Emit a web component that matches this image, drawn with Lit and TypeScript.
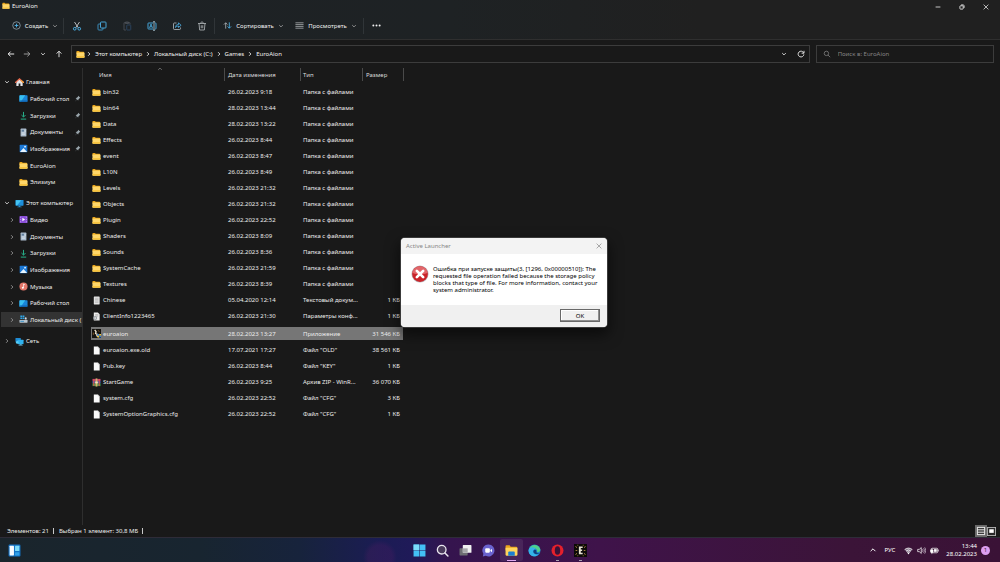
import { LitElement, html, css, svg, nothing, TemplateResult } from "lit";
import { customElement, state } from "lit/decorators.js";
import { classMap } from "lit/directives/class-map.js";

const art = (box: string, cls: string, body: unknown) =>
  html`<svg class=${cls} viewBox=${box} aria-hidden="true" fill="none">${body}</svg>`;

const glyphs: Record<string, TemplateResult> = {
  folder: svg`<path d="M1 3.2c0-.7.5-1.2 1.200-1.200h4.300l1.800 2H16.800c.7 0 1.200.5 1.200 1.200v3H1z" fill="#e8a317"/><path d="M1 5.600h16.800c.7 0 1.200.5 1.200 1.200v9c0 .7-.5 1.200-1.200 1.200H2.200c-.7 0-1.200-.5-1.200-1.200z" fill="#ffd76a"/><path d="M1 13.500h18v2.300c0 .8-.5 1.200-1.200 1.200H2.200c-.7 0-1.200-.5-1.200-1.200z" fill="#f8c440"/>`,
  home: svg`<path d="M3 8v10h5v-6h4v6h5V8l-7-6z" fill="#e4e4e8"/><path d="M1 10 10 2l9 8" stroke="#e8694a" stroke-width="2.600" stroke-linecap="round"/><path d="M14 6l5 4" stroke="#f2a33a" stroke-width="2.600" stroke-linecap="round"/>`,
  desktop: svg`<rect x="1" y="3" width="18" height="14" rx="1.500" fill="#1a86d8"/><path d="M1 4.500C1 3.700 1.700 3 2.500 3H14L4 17H2.500C1.700 17 1 16.300 1 15.500z" fill="#39c0f0"/><path d="M1 14.500h18v1c0 .8-.7 1.500-1.500 1.500h-15C1.700 17 1 16.300 1 15.500z" fill="#0f63b0"/>`,
  download: svg`<path d="M10 2v11M5.500 9l4.500 4.500L14.500 9M4 18h12" stroke="#26b08a" stroke-width="2.200"/>`,
  docs: svg`<rect x="3.500" y="1" width="13" height="18" rx="1.500" fill="#a9bacb"/><rect x="6" y="4" width="5" height="4" fill="#5f7d9c"/><path d="M12.500 5H15M12.500 7.500H15M6 11h8M6 14h8" stroke="#e9f0f7" stroke-width="1.400"/>`,
  pictures: svg`<rect x="1.500" y="1.500" width="17" height="17" rx="2" fill="#1b78d6"/><path d="M2 18l8-9 8 9z" fill="#e8f5ff"/><circle cx="13.500" cy="6" r="2" fill="#e8f5ff"/>`,
  pc: svg`<rect x="1" y="2" width="18" height="13" rx="1.500" fill="#1d8fdb"/><path d="M2 3h12L5 14H2z" fill="#45c5f2"/><path d="M8 15h4v2H8zM5 17h10v1.500H5z" fill="#2c93c9"/>`,
  video: svg`<rect x="1" y="2" width="18" height="16" rx="2" fill="#8a4fd8"/><path d="M3.500 4v2M3.500 9v2M3.500 14v2M16.500 4v2M16.500 9v2M16.500 14v2" stroke="#d7b9ff" stroke-width="1.600"/><path d="M7.500 6l6 4-6 4z" fill="#fff"/>`,
  music: svg`<circle cx="10" cy="10" r="9" fill="#e2776a"/><circle cx="8.500" cy="13" r="2.200" fill="#fff"/><path d="M10 13V4.500l3.500 2" stroke="#fff" stroke-width="1.500"/>`,
  disk: svg`<path d="M3 1h4v4H3zM8 1h4v4H8zM3 6h4v3H3zM8 6h4v3H8z" fill="#2fa8ea"/><rect x="1" y="11" width="18" height="6" rx="1" fill="#b9c4cd"/><rect x="3" y="13" width="8" height="2" fill="#2d8ecb"/><path d="M13 10V6.500c0-2 4-2 4 0V10z" fill="#d7dde2"/>`,
  network: svg`<rect x="1" y="2" width="12" height="9" rx="1" fill="#1f8ad2"/><rect x="6" y="6" width="13" height="10" rx="1" fill="#2eb2ef"/><path d="M10 16h5v2h-5zM8 18h9v1H8z" fill="#6fc4e8"/><circle cx="5" cy="12" r="3" fill="#58cdf5"/>`,
  text: svg`<rect x="4" y="1" width="13" height="18" rx="1" fill="#e4e4e4"/><path d="M6.500 5h8M6.500 8h8M6.500 11h8M6.500 14h8" stroke="#a0a0a0" stroke-width="1.200"/>`,
  ini: svg`<path d="M4 1h9l4 4v14H4z" fill="#ededed"/><path d="M7 6h7M7 9h7" stroke="#8b8b8b" stroke-width="1.200"/><circle cx="7" cy="13.500" r="4.500" fill="#9da3a8"/><circle cx="7" cy="13.500" r="1.800" fill="#f0f0f0"/>`,
  exe: svg`<rect x="0" y="0" width="20" height="20" fill="#15130f"/><path d="M6 2l3 4-1 4 3 1v4l4 2" stroke="#f1e6cf" stroke-width="3"/><path d="M3 8v5M14 3l2 3" stroke="#a8712c" stroke-width="1.600"/><path d="M12 11h4v4h-4z" fill="#2f7fe0"/><path d="M16 11h4v4h-4z" fill="#f1c232"/><path d="M12 15h4v4h-4z" fill="#f1c232"/><path d="M16 15h4v4h-4z" fill="#2f7fe0"/>`,
  blank: svg`<path d="M4 1h9l4 4v14H4z" fill="#fafafa"/><path d="M13 1v4h4z" fill="#b9b9b9"/>`,
  zip: svg`<rect x="1" y="2" width="18" height="5" fill="#b5427a"/><rect x="1" y="7" width="18" height="5" fill="#3f63c4"/><rect x="1" y="12" width="18" height="6" fill="#3c9a50"/><path d="M4 2v16M16 2v16" stroke="#e55248" stroke-width="2.400"/><rect x="8" y="1" width="4" height="18" fill="#d8b069"/><rect x="7" y="8" width="6" height="4" fill="#f5e3b5"/>`,
  pin: svg`<path d="M12 2l6 6-2 1-3 3-1 4-3.500-3.500L2 19l6-7L4.500 8.500l4-1 3-3.500z" fill="#9aa6ad"/>`,
  down: svg`<path d="M4 7l6 6 6-6" stroke="currentColor" stroke-width="2.800"/>`,
  right: svg`<path d="M7 4l6 6-6 6" stroke="currentColor" stroke-width="2.800"/>`,
  up: svg`<path d="M4 13l6-6 6 6" stroke="currentColor" stroke-width="2.400"/>`,
  arrowL: svg`<path d="M18 10H3M9 4l-6 6 6 6" stroke="currentColor" stroke-width="2.400"/>`,
  arrowR: svg`<path d="M2 10h15M11 4l6 6-6 6" stroke="currentColor" stroke-width="2.200"/>`,
  arrowU: svg`<path d="M10 18V3M4 9l6-6 6 6" stroke="currentColor" stroke-width="2.200"/>`,
  refresh: svg`<path d="M16.500 7A7.200 7.200 0 1 0 17.200 11" stroke="currentColor" stroke-width="2.200"/><path d="M17.500 2v6h-6" stroke="currentColor" stroke-width="2.200"/>`,
  search: svg`<circle cx="8.500" cy="8.500" r="5.500" stroke="currentColor" stroke-width="2"/><path d="M12.500 12.500L18 18" stroke="currentColor" stroke-width="2"/>`,
  plus: svg`<circle cx="10" cy="10" r="8.400" stroke="#9fb0bb" stroke-width="1.600"/><path d="M10 6v8M6 10h8" stroke="#4cb4ec" stroke-width="2"/>`,
  cut: svg`<path d="M5 2l7.500 11.500M15 2L7.500 13.500" stroke="#c6cbce" stroke-width="1.800"/><circle cx="5.500" cy="15.500" r="2.700" stroke="#4cb4ec" stroke-width="1.900"/><circle cx="14.500" cy="15.500" r="2.700" stroke="#4cb4ec" stroke-width="1.900"/>`,
  copy: svg`<path d="M6 6H3.500C2.700 6 2 6.700 2 7.500v9c0 .8.7 1.500 1.500 1.500h7c.8 0 1.500-.7 1.500-1.500V14" stroke="#3f98cc" stroke-width="1.800"/><rect x="7" y="2" width="11" height="12" rx="1.500" stroke="#4cb4ec" stroke-width="1.800"/>`,
  paste: svg`<path d="M8 18H4V3.500h12V7M7 2h6v3H7z" stroke="#4b5157" stroke-width="1.700"/><rect x="9.500" y="8" width="8" height="10" rx="1" stroke="#2d4866" stroke-width="1.700"/>`,
  rename: svg`<path d="M12 4H3c-.6 0-1 .4-1 1v10c0 .6.4 1 1 1h9M16 4h1c.6 0 1 .4 1 1v10c0 .6-.4 1-1 1h-1" stroke="#4cb4ec" stroke-width="1.800"/><path d="M5 14l3-8 3 8M6 11.500h4" stroke="#4cb4ec" stroke-width="1.500"/><path d="M14 1.500v17M12 1.500h4M12 18.500h4" stroke="#b9d6e6" stroke-width="1.500"/>`,
  share: svg`<path d="M9 4H4.500C3.700 4 3 4.700 3 5.500v10c0 .8.7 1.500 1.500 1.500h11c.8 0 1.500-.7 1.500-1.500V13" stroke="#aab3b9" stroke-width="1.700"/><path d="M7 13c0-4 2-6 6-6V3.500L18 8.500l-5 4.500V10c-3 0-4.500 1-6 3z" stroke="#4cb4ec" stroke-width="1.600"/>`,
  trash: svg`<path d="M2 5h16M4 5l1.300 13h9.400L16 5M7 5c0-4 6-4 6 0M8.500 8.500v6M11.500 8.500v6" stroke="#b5babd" stroke-width="1.600"/>`,
  sort: svg`<path d="M6 17V4M2 8l4-4 4 4" stroke="#b9bfc3" stroke-width="1.700"/><path d="M14 3v13M10 12l4 4 4-4" stroke="#4cb4ec" stroke-width="1.900"/>`,
  view: svg`<path d="M1 4h18M1 8h18M1 12h18M1 16h18" stroke="#a9adb0" stroke-width="1.800"/>`,
  dots: svg`<circle cx="3" cy="10" r="2.200" fill="#f0f0f0"/><circle cx="10" cy="10" r="2.200" fill="#f0f0f0"/><circle cx="17" cy="10" r="2.200" fill="#f0f0f0"/>`,
  min: svg`<path d="M2 10h16" stroke="currentColor" stroke-width="2.600"/>`,
  restore: svg`<rect x="3" y="6" width="11" height="11" rx="2" stroke="currentColor" stroke-width="2.800"/><path d="M7 3h7c1.700 0 3 1.300 3 3v7" stroke="currentColor" stroke-width="2.800"/>`,
  close: svg`<path d="M2 2l16 16M18 2L2 18" stroke="currentColor" stroke-width="2.400"/>`,
  error: svg`<circle cx="20" cy="20" r="19" fill="#b9bcc0"/><circle cx="20" cy="20" r="17.500" fill="#c9242a"/><path d="M3 17a17.300 17.300 0 0 1 34 0C28 22 12 22 3 17z" fill="#e2666a"/><path d="M13 13l14 14M27 13L13 27" stroke="#fff" stroke-width="6" stroke-linecap="round"/>`,
  details: svg`<rect x="0" y="0" width="20" height="20" fill="#6a6a6a"/><rect x="4" y="4" width="12" height="12" fill="#3a3a3a" stroke="#e8e8e8" stroke-width="1.600"/><path d="M4 8h12M4 12h12" stroke="#e8e8e8" stroke-width="1.600"/>`,
  thumbs: svg`<rect x="1" y="1" width="18" height="18" fill="#2a2a2a" stroke="#b5b5b5" stroke-width="2"/><rect x="5" y="5" width="10" height="8" fill="#fff"/>`,
  widgets: svg`<rect x="1" y="1" width="22" height="22" rx="2" fill="#1474c6"/><rect x="3" y="3" width="8" height="18" rx="1" fill="#f7fbff"/><rect x="13" y="3" width="8" height="10" rx="1" fill="#7fdcf9"/><rect x="13" y="15" width="8" height="6" rx="1" fill="#2fa0e8"/>`,
  start: svg`<path d="M1 1h10.500v10.500H1zM12.500 1H23v10.500H12.500zM1 12.500h10.500V23H1zM12.500 12.500H23V23H12.500z" fill="#43c0f5"/><path d="M1 1h10.500v10.500H1z" fill="#7bdcfb"/>`,
  find: svg`<circle cx="10.500" cy="10.500" r="8" stroke="#e9e4ee" stroke-width="2.400" fill="#4a3a5c"/><path d="M16.500 16.500L22 22" stroke="#e9e4ee" stroke-width="2.800" stroke-linecap="round"/>`,
  tasks: svg`<rect x="1" y="8" width="15" height="13" rx="1" fill="#6d6d72"/><rect x="7" y="2" width="16" height="14" rx="1" fill="#f1f1f1"/><path d="M7 8h9v8H7z" fill="#a7a7aa"/>`,
  chat: svg`<path d="M12 1a11 11 0 1 1-5 20.800L1.500 23l1-5A11 11 0 0 1 12 1z" fill="#6a63cf"/><rect x="6" y="8" width="8.500" height="8" rx="1.500" fill="#fff"/><path d="M15.500 11l3-2v6l-3-2z" fill="#fff"/>`,
  explorer: svg`<path d="M1 4c0-1 .6-1.500 1.500-1.500h6l2 2.500H21c1 0 1.500.6 1.500 1.500V12H1z" fill="#e9a51c"/><path d="M1 7h22v13c0 1-.5 1.500-1.500 1.500h-19C1.500 21.500 1 21 1 20z" fill="#ffd55c"/><path d="M6 15.500c0-1 .6-1.500 1.500-1.500h9c1 0 1.500.5 1.500 1.500v6H6z" fill="#1b7fd0"/>`,
  edge: svg`<circle cx="12" cy="12" r="11" fill="#1c7fd0"/><path d="M2 9C5 0 19-1 22.500 9c1 4-2 6.500-6 6 1-2 0-6-4-6.500C8 8 4 10 2 9z" fill="#4fd08a"/><path d="M1.500 9.500C6 4 14 6 14.500 11c-2-1.500-5-.5-5 3 0 4 5 7 10 5C14 26 1 23 1 12z" fill="#35b4e8"/><path d="M14.500 11c-2-1-4.500 0-4.500 3 0 2 1.500 4 4 4.500 3 .5 5-.5 7-1.500-4 0-7-1-5.500-3.500z" fill="#123f7a"/>`,
  opera: svg`<circle cx="12" cy="12" r="11" fill="#e5202c"/><ellipse cx="12" cy="12" rx="5" ry="8" fill="#3a1238"/>`,
  game: svg`<rect x="0" y="0" width="24" height="24" fill="#0d0b08"/><path d="M9 4.500h7v2.800h-3.500v3H15v2.800h-2.500v3.200H16V19H9z" fill="#e8e2d2"/><path d="M3 4l2 3M3 12h3M3 20l2-3M21 4l-2 3M21 12h-3M21 20l-2-3M7 1.500v1.500M17 1.500v1.500M7 21v1.500M17 21v1.500" stroke="#c59a4a" stroke-width="1.500"/>`,
  wifi: svg`<path d="M1 8a13 13 0 0 1 18 0l-9 10z" fill="#8c7a90"/><path d="M1.500 8a12.500 12.500 0 0 1 17 0M4.500 11.300a8 8 0 0 1 11 0M7.300 14.300a4 4 0 0 1 5.400 0" stroke="#fff" stroke-width="1.700"/><circle cx="10" cy="16.500" r="1.600" fill="#fff"/>`,
  sound: svg`<path d="M1.500 7.500H5l4.500-4v13L5 12.500H1.500z" stroke="#fff" stroke-width="1.600"/><path d="M12 7c1.500 1.800 1.500 4.200 0 6M14.500 5c2.500 3 2.500 7 0 10M17 3c3.200 4.200 3.200 9.800 0 14" stroke="#e6dde8" stroke-width="1.400"/>`,
  battery: svg`<rect x="3" y="5" width="14" height="10" rx="2" stroke="#fff" stroke-width="1.600"/><rect x="9" y="7" width="6" height="6" fill="#fff"/><path d="M18.500 8v4" stroke="#fff" stroke-width="1.600"/><path d="M1 9h6v3c0 2-1 3-3 3s-3-1-3-3zM2.500 9V6M5.500 9V6M4 15v3" fill="#fff" stroke="#fff" stroke-width="1.200"/>`,
};

const icon = (name: string, cls = "i10", box = "0 0 20 20") => art(box, cls, glyphs[name]);

interface Entry { name: string; date: string; type: string; size?: string; icon: string; }

const FOLDER = "Папка с файлами";
const dir = (name: string, date: string): Entry => ({ name, date, type: FOLDER, icon: "folder" });

const FILES: Entry[] = [
  dir("bin32", "26.02.2023 9:18"),
  dir("bin64", "28.02.2023 13:44"),
  dir("Data", "28.02.2023 13:22"),
  dir("Effects", "26.02.2023 8:44"),
  dir("event", "26.02.2023 8:47"),
  dir("L10N", "26.02.2023 8:49"),
  dir("Levels", "26.02.2023 21:32"),
  dir("Objects", "26.02.2023 21:32"),
  dir("Plugin", "26.02.2023 22:52"),
  dir("Shaders", "26.02.2023 8:09"),
  dir("Sounds", "26.02.2023 8:36"),
  dir("SystemCache", "26.02.2023 21:59"),
  dir("Textures", "26.02.2023 8:39"),
  { name: "Chinese", date: "05.04.2020 12:14", type: "Текстовый докум...", size: "1 КБ", icon: "text" },
  { name: "ClientInfo1223465", date: "26.02.2023 21:30", type: "Параметры конф...", size: "1 КБ", icon: "ini" },
  { name: "euroaion", date: "28.02.2023 13:27", type: "Приложение", size: "31 546 КБ", icon: "exe" },
  { name: "euroaion.exe.old", date: "17.07.2021 17:27", type: 'Файл "OLD"', size: "38 561 КБ", icon: "blank" },
  { name: "Pub.key", date: "26.02.2023 8:44", type: 'Файл "KEY"', size: "1 КБ", icon: "blank" },
  { name: "StartGame", date: "26.02.2023 9:25", type: "Архив ZIP - WinR...", size: "36 070 КБ", icon: "zip" },
  { name: "system.cfg", date: "26.02.2023 22:52", type: 'Файл "CFG"', size: "3 КБ", icon: "blank" },
  { name: "SystemOptionGraphics.cfg", date: "26.02.2023 22:52", type: 'Файл "CFG"', size: "1 КБ", icon: "blank" },
];

interface Node { label: string; icon: string; pinned?: boolean; current?: boolean; }
interface Section { label: string; icon: string; open: boolean; arrows: boolean; items: Node[]; }

const TREE: Section[] = [
  {
    label: "Главная", icon: "home", open: true, arrows: false,
    items: [
      { label: "Рабочий стол", icon: "desktop", pinned: true },
      { label: "Загрузки", icon: "download", pinned: true },
      { label: "Документы", icon: "docs", pinned: true },
      { label: "Изображения", icon: "pictures", pinned: true },
      { label: "EuroAion", icon: "folder" },
      { label: "Элизиум", icon: "folder" },
    ],
  },
  {
    label: "Этот компьютер", icon: "pc", open: true, arrows: true,
    items: [
      { label: "Видео", icon: "video" },
      { label: "Документы", icon: "docs" },
      { label: "Загрузки", icon: "download" },
      { label: "Изображения", icon: "pictures" },
      { label: "Музыка", icon: "music" },
      { label: "Рабочий стол", icon: "desktop" },
      { label: "Локальный диск (", icon: "disk", current: true },
    ],
  },
  { label: "Сеть", icon: "network", open: false, arrows: true, items: [] },
];

const base = css`
  * { box-sizing: border-box; }
  button, input, a {
    font: inherit; color: inherit; background: none; border: 0; padding: 0; margin: 0;
    text-decoration: none; outline: none;
  }
  button { display: flex; align-items: center; justify-content: center; }
  svg { display: block; flex: none; }
  .i6 { width: 6px; height: 6px; }
  .i8 { width: 8px; height: 8px; }
  .i9 { width: 9px; height: 9px; }
  .i10 { width: 10px; height: 10px; }
  .i12 { width: 12px; height: 12px; }
  .i13 { width: 13px; height: 13px; }
`;

@customElement("command-bar")
export class CommandBar extends LitElement {
  static styles = [base, css`
    :host {
      display: block; color: #f2f2f2; border-bottom: 1px solid #2f2f2f;
      background: linear-gradient(90deg, #1d2225, #1e2224 45%, #202020 70%);
    }
    .title { display: flex; align-items: center; height: 12px; padding: 0 2px; }
    .caption { flex: 1; margin-left: 2px; }
    .win { width: 24px; height: 14px; margin-top: 2px; }
    .tools { display: flex; align-items: center; height: 27px; padding-left: 8px; }
    .menu { gap: 4px; height: 16px; }
    .create { width: 54px; margin-right: 1px; }
    .sorting { width: 67px; margin-left: 5px; }
    .viewing { width: 68px; margin: 0 3px 0 5px; }
    .menu .i6 { color: #a0a0a0; }
    .tool { width: 25px; height: 16px; }
    .rule { width: 1px; height: 16px; background: #303538; }
    .more { width: 25px; height: 16px; }
  `];
  render() {
    return html`
      <div class="title">
        ${icon("folder", "i8")}<span class="caption">EuroAion</span>
        <button class="win" aria-label="Свернуть">${icon("min", "i6")}</button>
        <button class="win" aria-label="Восстановить">${icon("restore", "i6")}</button>
        <button class="win" aria-label="Закрыть">${icon("close", "i6")}</button>
      </div>
      <div class="tools">
        <button class="menu create">${icon("plus", "i9")}Создать${icon("down", "i6")}</button>
        <span class="rule"></span>
        ${[["cut", "Вырезать"], ["copy", "Копировать"], ["paste", "Вставить"], ["rename", "Переименовать"], ["share", "Поделиться"], ["trash", "Удалить"]].map(
          ([n, label]) => html`<button class="tool" aria-label=${label}>${icon(n, "i10")}</button>`)}
        <span class="rule"></span>
        <button class="menu sorting">${icon("sort", "i9")}Сортировать${icon("down", "i6")}</button>
        <button class="menu viewing">${icon("view", "i9")}Просмотреть${icon("down", "i6")}</button>
        <span class="rule"></span>
        <button class="more" aria-label="Подробнее">${icon("dots", "i9")}</button>
      </div>`;
  }
}

@customElement("address-row")
export class AddressRow extends LitElement {
  static styles = [base, css`
    :host { display: flex; align-items: center; padding: 5px 6px 4px 3px; color: #f2f2f2; }
    .nav { width: 16px; height: 16px; }
    .dim { color: #a8a8a8; }
    .path { display: flex; align-items: center; height: 18px; flex: 1; border: 1px solid #3c3c3c; padding-left: 4px; gap: 1px; margin-left: 4px; }
    .crumbs { display: flex; align-items: center; gap: 3px; flex: 1; }
    .box { display: flex; align-items: center; height: 18px; flex: 0 0 18%; border: 1px solid #3c3c3c; margin-left: 6px; padding: 0 6px; gap: 7px; color: #7d7d7d; }
    .field { flex: 1; min-width: 0; height: 10px; line-height: 10px; }
    .field::placeholder { color: #858585; opacity: 1; }
    .act { width: 16px; height: 14px; }
  `];
  render() {
    const path = ["Этот компьютер", "Локальный диск (C:)", "Games", "EuroAion"];
    return html`
      <button class="nav" aria-label="Назад">${icon("arrowL", "i8")}</button>
      <button class="nav dim" aria-label="Вперёд">${icon("arrowR", "i8")}</button>
      <button class="nav" aria-label="Недавние">${icon("down", "i6")}</button>
      <button class="nav" aria-label="Вверх">${icon("arrowU", "i8")}</button>
      <div class="path">
        ${icon("folder", "i9")}
        <nav class="crumbs">${path.map((p) => html`${icon("right", "i6")}<a href="#">${p}</a>`)}</nav>
        <button class="act" aria-label="Журнал">${icon("down", "i6")}</button>
        <button class="act" aria-label="Обновить">${icon("refresh", "i8")}</button>
      </div>
      <label class="box">${icon("search", "i8")}
        <input class="field" type="text" placeholder="Поиск в: EuroAion" aria-label="Поиск" />
      </label>`;
  }
}

@customElement("folder-tree")
export class FolderTree extends LitElement {
  static styles = [base, css`
    :host { display: block; overflow: hidden; border-right: 1px solid #2e2e2e; padding: 6px 0 0 1px; color: #ececec; }
    .section { padding-bottom: 5px; }
    .head, .leaf { display: flex; align-items: center; white-space: nowrap; }
    .head { height: 16px; padding-left: 3px; gap: 2px; }
    .head .i9 { margin-left: 3px; }
    .leaf { height: 17px; padding-left: 8px; gap: 2px; }
    .leaf:nth-child(3n + 1) { height: 16px; }
    .arrow { width: 6px; height: 6px; color: #9a9a9a; flex: none; }
    .current { background: #333; height: 15px; margin: 1px 0; }
    .leaf .i9 { margin-left: 2px; }
    .label { flex: 1; min-width: 0; }
    .pin { width: 7px; height: 7px; margin-right: 1px; }
  `];
  render() {
    return TREE.map((s) => html`
      <div class="section">
        <a class="head" href="#">${icon(s.open ? "down" : "right", s.open ? "i6" : "arrow")}${icon(s.icon, "i9")}<span>${s.label}</span></a>
        ${s.items.map((n) => html`
          <a href="#" class=${classMap({ leaf: true, current: !!n.current })}>
            ${s.arrows ? icon("right", "arrow") : html`<span class="arrow"></span>`}
            ${icon(n.icon, "i9")}<span class="label">${n.label}</span>
            ${n.pinned ? icon("pin", "pin") : nothing}
          </a>`)}
      </div>`);
  }
}

@customElement("file-list")
export class FileList extends LitElement {
  @state() private selected = "euroaion";
  static styles = [base, css`
    :host { display: block; padding-left: 8px; color: #ececec; }
    .grid { border-spacing: 0; table-layout: fixed; width: 323px; }
    .name { width: 133px; } .date { width: 76px; } .type { width: 62px; } .size { width: 41px; } .rest { width: 11px; }
    th { font-weight: 400; text-align: left; height: 13px; padding: 0 0 0 3px; border-left: 1px solid #4a4a4a; color: #dadada; position: relative; }
    th.name { border-left: 0; padding-left: 8px; }
    th.type { padding-left: 2px; }
    .caret { position: absolute; width: 6px; height: 6px; left: 66px; top: -2px; color: #8a8a8a; }
    .gap td { height: 3px; }
    td { height: 16px; padding: 0 0 0 4px; white-space: nowrap; }
    td.first { padding-left: 1px; }
    td.kind { padding-left: 3px; }
    td.num { text-align: right; padding: 0 3px 0 0; }
    .cell { display: flex; align-items: center; gap: 2px; }
    .on td { height: 18px; border: solid transparent; border-width: 3px 0 2px; background-clip: padding-box; }
    .on td:not(.tail) { background-color: #767676; }
  `];
  render() {
    return html`
      <table class="grid">
        <thead><tr>
          <th class="name">Имя${icon("up", "caret")}</th>
          <th class="date">Дата изменения</th><th class="type">Тип</th><th class="size">Размер</th><th class="rest"></th>
        </tr></thead>
        <tbody>
          <tr class="gap"><td></td></tr>
          ${FILES.map((f) => html`
            <tr class=${classMap({ on: f.name === this.selected })} @click=${() => (this.selected = f.name)}>
              <td class="first"><span class="cell">${icon(f.icon, "i9")}${f.name}</span></td>
              <td>${f.date}</td><td class="kind">${f.type}</td><td class="num">${f.size ?? ""}</td><td class="tail"></td>
            </tr>`)}
        </tbody>
      </table>`;
  }
}

@customElement("error-dialog")
export class ErrorDialog extends LitElement {
  static styles = [base, css`
    :host {
      display: block; width: 206px; border-radius: 4px; overflow: hidden; background: #fff; color: #000;
      box-shadow: 0 0 0 1px #3a3a3a, 0 6px 14px 2px #0008;
    }
    .bar { display: flex; align-items: center; justify-content: space-between; height: 16px; padding: 0 4px 0 5px; background: #f3f3f3; color: #858585; }
    .x { width: 8px; height: 8px; color: #8a8a8a; }
    .body { display: flex; gap: 4px; padding: 11px 8px 11px 10px; }
    .sign { width: 18px; height: 18px; }
    .msg { margin: 0; padding-top: 1px; line-height: 7px; }
    .foot { display: flex; justify-content: flex-end; height: 22px; padding: 4px 7px; background: #f0f0f0; }
    .ok { width: 40px; height: 13px; background: #f0f0f0; border: 1px solid #696969; box-shadow: inset -1px -1px #8f8f8f, inset 1px 1px #fff; }
  `];
  render() {
    return html`
      <div class="bar"><span>Active Launcher</span><button class="x" aria-label="Закрыть">${icon("close", "i6")}</button></div>
      <div class="body">
        ${icon("error", "sign", "0 0 40 40")}
        <p class="msg">Ошибка при запуске защиты(3, [1296, 0x00000510]): The<br>requested file operation failed because the storage policy<br>blocks that type of file. For more information, contact your<br>system administrator.</p>
      </div>
      <div class="foot"><button class="ok">OK</button></div>`;
  }
}

@customElement("task-bar")
export class TaskBar extends LitElement {
  static styles = [base, css`
    :host {
      display: grid; grid-template-columns: 1fr auto 1fr; align-items: center; height: 25px; color: #fff; border-top: 1px solid #2e2c38;
      background:
        radial-gradient(circle at 38% 80%, #6a1c6a33 12px, #6a1c6a00 17px),
        linear-gradient(90deg, #1a252c, #182530 20%, #17233c 30%, #1b1c54 38%, #1f1a58 41%, #35144e 45%, #3f134a 60%, #3b1438 85%, #3a1236);
    }
    .left { padding-left: 8px; display: flex; }
    .apps { display: flex; }
    .app { width: 23px; height: 22px; position: relative; border-radius: 2px; }
    .front { background: #ffffff14; }
    .front::after, .run::after { content: ""; position: absolute; bottom: 0; height: 1px; background: #a8a0b0; width: 3px; }
    .front::after { width: 9px; background: #e0a8f0; }
    .tray { display: flex; align-items: center; justify-content: flex-end; padding-right: 10px; gap: 4px; }
    .lang { margin: 0 5px 0 4px; }
    .clock { text-align: right; margin-left: 3px; }
    .badge { width: 9px; height: 9px; border-radius: 50%; background: #dd9ef0; color: #3a1238; text-align: center; line-height: 9px; }
  `];
  render() {
    const apps: [string, string, string][] = [
      ["start", "Пуск", ""], ["find", "Поиск", ""], ["tasks", "Представление задач", ""], ["chat", "Чат", ""],
      ["explorer", "Проводник", "front"], ["edge", "Edge", ""], ["opera", "Opera", "run"], ["game", "EuroAion", "run"],
    ];
    return html`
      <div class="left"><button aria-label="Виджеты">${icon("widgets", "i13", "0 0 24 24")}</button></div>
      <div class="apps">${apps.map(([n, label, c]) => html`<button class="app ${c}" aria-label=${label}>${icon(n, "i13", "0 0 24 24")}</button>`)}</div>
      <div class="tray">
        ${icon("up", "i8")}<span class="lang">РУС</span>
        ${icon("wifi", "i9")}${icon("sound", "i9")}${icon("battery", "i9")}
        <div class="clock"><div>13:44</div><div>28.02.2023</div></div>
        <span class="badge">1</span>
      </div>`;
  }
}

@customElement("app-root")
export class AppRoot extends LitElement {
  static styles = [base, css`
    :host {
      display: flex; flex-direction: column; min-height: 100vh; background: #191919; position: relative;
      font: 6px/8px "Noto Sans", "Open Sans", sans-serif; color: #ececec; overflow: hidden;
    }
    .main { flex: 1; display: grid; grid-template-columns: 83px 1fr; padding-top: 1px; }
    .status { display: flex; align-items: center; height: 12px; padding: 0 3px 0 7px; }
    .sep { width: 1px; height: 6px; background: #c8c8c8; margin: 0 5px 0 4px; }
    .fill { flex: 1; }
    .mode { width: 11px; height: 12px; }
    .modal { position: absolute; left: 401px; top: 238px; }
  `];
  render() {
    return html`
      <command-bar></command-bar>
      <address-row></address-row>
      <div class="main">
        <folder-tree></folder-tree>
        <file-list></file-list>
      </div>
      <div class="status">
        <span>Элементов: 21</span><span class="sep"></span><span>Выбран 1 элемент: 30,8 МБ</span><span class="sep"></span>
        <span class="fill"></span>
        <button class="mode" aria-label="Таблица">${icon("details", "i12")}</button>
        <button class="mode" aria-label="Крупные значки">${icon("thumbs", "i9")}</button>
      </div>
      <task-bar></task-bar>
      <error-dialog class="modal" role="dialog"></error-dialog>`;
  }
}
